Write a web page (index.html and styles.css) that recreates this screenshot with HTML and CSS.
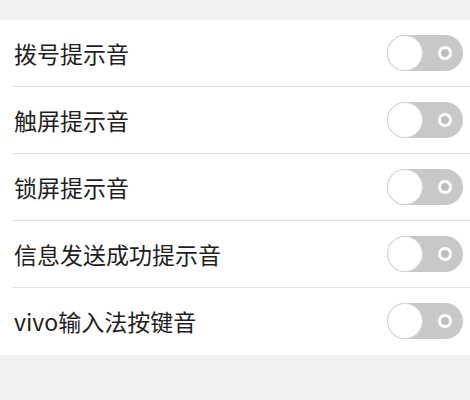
FILE: index.html
```html
<!DOCTYPE html>
<html lang="zh-CN">
<head>
  <meta charset="UTF-8" />
  <meta name="viewport" content="width=device-width, initial-scale=1" />
  <title>提示音</title>
  <link rel="stylesheet" href="styles.css">
</head>
<body>
  <div class="settings">
    <div class="row">
      <div class="row-inner">
        <span class="label">拨号提示音</span>
        <span class="switch"><span class="knob"></span><span class="dot"></span></span>
      </div>
    </div>
    <div class="row">
      <div class="row-inner">
        <span class="label">触屏提示音</span>
        <span class="switch"><span class="knob"></span><span class="dot"></span></span>
      </div>
    </div>
    <div class="row">
      <div class="row-inner">
        <span class="label">锁屏提示音</span>
        <span class="switch"><span class="knob"></span><span class="dot"></span></span>
      </div>
    </div>
    <div class="row">
      <div class="row-inner">
        <span class="label">信息发送成功提示音</span>
        <span class="switch"><span class="knob"></span><span class="dot"></span></span>
      </div>
    </div>
    <div class="row">
      <div class="row-inner">
        <span class="label">vivo输入法按键音</span>
        <span class="switch"><span class="knob"></span><span class="dot"></span></span>
      </div>
    </div>
  </div>
</body>
</html>
```

FILE: styles.css
```css
body {
  margin: 0;
  padding-top: 20px;
  background: #f2f2f2;
  font-family: "Noto Sans CJK SC", "Noto Sans", sans-serif;
}

.settings {
  background: #fff;
}

.row {
  padding-left: 12px;
}

.row-inner {
  height: 66px;
  display: flex;
  align-items: center;
  justify-content: space-between;
  padding-left: 2px;
  padding-right: 7px;
  border-bottom: 1px solid #e2e2e2;
}

.row:last-child .row-inner {
  border-bottom-color: transparent;
}

.label {
  font-size: 23px;
  color: #1e1e1e;
}

.switch {
  width: 76px;
  height: 36px;
  border-radius: 18px;
  background: #c8c8c8;
  display: flex;
  align-items: center;
  justify-content: space-between;
  padding-right: 11px;
  box-sizing: border-box;
}

.knob {
  width: 36px;
  height: 36px;
  border-radius: 50%;
  background: #fff;
  border: 1.5px solid #d6d6d6;
  box-sizing: border-box;
}

.dot {
  width: 14px;
  height: 14px;
  border-radius: 50%;
  border: 3px solid #fff;
  background: #bdbdbd;
  box-sizing: border-box;
}
```
